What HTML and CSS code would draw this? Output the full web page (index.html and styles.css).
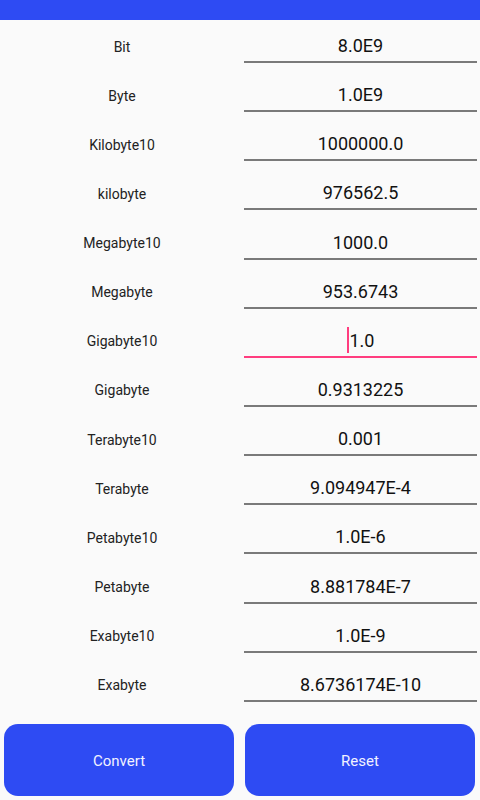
FILE: index.html
```html
<!DOCTYPE html>
<html lang="en">
<head>
  <meta charset="UTF-8" />
  <meta name="viewport" content="width=device-width, initial-scale=1" />
  <title>Data Storage Converter</title>
  <link rel="stylesheet" href="styles.css">
</head>
<body>
  <div class="status-bar"></div>

  <div class="units">
    <div class="row"><div class="label">Bit</div><div class="field">8.0E9</div></div>
    <div class="row"><div class="label">Byte</div><div class="field">1.0E9</div></div>
    <div class="row"><div class="label">Kilobyte10</div><div class="field">1000000.0</div></div>
    <div class="row"><div class="label">kilobyte</div><div class="field">976562.5</div></div>
    <div class="row"><div class="label">Megabyte10</div><div class="field">1000.0</div></div>
    <div class="row"><div class="label">Megabyte</div><div class="field">953.6743</div></div>
    <div class="row"><div class="label">Gigabyte10</div><div class="field active"><span class="caret"></span>1.0</div></div>
    <div class="row"><div class="label">Gigabyte</div><div class="field">0.9313225</div></div>
    <div class="row"><div class="label">Terabyte10</div><div class="field">0.001</div></div>
    <div class="row"><div class="label">Terabyte</div><div class="field">9.094947E-4</div></div>
    <div class="row"><div class="label">Petabyte10</div><div class="field">1.0E-6</div></div>
    <div class="row"><div class="label">Petabyte</div><div class="field">8.881784E-7</div></div>
    <div class="row"><div class="label">Exabyte10</div><div class="field">1.0E-9</div></div>
    <div class="row"><div class="label">Exabyte</div><div class="field">8.6736174E-10</div></div>
  </div>

  <div class="actions">
    <button class="btn">Convert</button>
    <button class="btn">Reset</button>
  </div>
</body>
</html>
```

FILE: styles.css
```css
body {
  margin: 0;
  padding: 0;
  background-color: #fafafa;
  font-family: Roboto, "Noto Sans", sans-serif;
  color: #222;
  width: 480px;
  height: 800px;
  overflow: hidden;
}

.status-bar {
  height: 20px;
  background-color: #2e4bf3;
}

.units {
  padding-top: 2px;
}

.row {
  display: grid;
  grid-template-columns: 244px 233px;
  height: 49.15px;
}

.label {
  display: flex;
  align-items: center;
  justify-content: center;
  font-size: 14px;
  color: #222;
  padding-top: 2px;
  height: 45px;
}

.field {
  margin-top: 4px;
  height: 37px;
  box-sizing: border-box;
  border-bottom: 2px solid #7a7a7a;
  display: flex;
  align-items: center;
  justify-content: center;
  font-size: 18px;
  color: #111;
  padding-top: 4px;
}

.field.active {
  border-bottom-color: #ff3d7f;
}

.caret {
  display: inline-block;
  width: 2px;
  height: 26px;
  background-color: #ff3d7f;
  margin-right: 1px;
}

.actions {
  display: flex;
  gap: 11px;
  padding: 14px 5px 0 4px;
}

.btn {
  flex: 1;
  height: 72px;
  padding-top: 4px;
  border: none;
  border-radius: 14px;
  background-color: #2e4bf3;
  color: #f2f2ff;
  font-family: Roboto, "Noto Sans", sans-serif;
  font-size: 15px;
  cursor: pointer;
}
```
